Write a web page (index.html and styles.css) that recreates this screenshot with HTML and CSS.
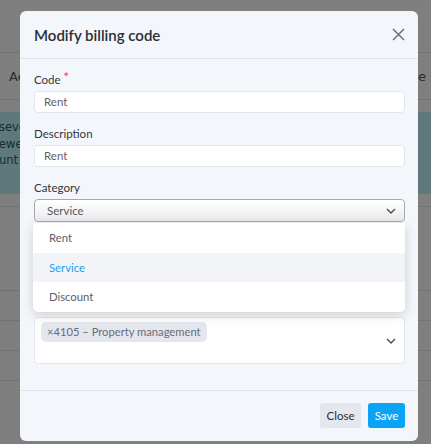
FILE: index.html
```html
<!DOCTYPE html>
<html lang="en">
<head>
<meta charset="utf-8">
<title>Modify billing code</title>
<link rel="stylesheet" href="styles.css">
</head>
<body>
<div class="page">
  <div class="toolbar"></div>
  <div class="table-head">
    <span class="th-left">Actions</span>
    <span class="th-right">Close s</span>
  </div>
  <div class="alert">
    <p class="alert-line">severe</p>
    <p class="alert-line">ewed</p>
    <p class="alert-line">unt c</p>
  </div>
  <div class="row r1"></div>
  <div class="row r2"></div>
  <div class="row r3"></div>
  <div class="row r4"></div>
  <div class="row r5"></div>
</div>
<div class="overlay"></div>

<div class="modal">
  <div class="modal-header">
    <h1 class="modal-title">Modify billing code</h1>
    <svg class="close-icon" width="13" height="13" viewBox="0 0 13 13"><path d="M1 1L12 12M12 1L1 12" stroke="#6e7074" stroke-width="1.5" fill="none"/></svg>
  </div>
  <div class="modal-body">
    <div class="field">
      <label class="label">Code <span class="req">*</span></label>
      <div class="input">Rent</div>
    </div>
    <div class="field">
      <label class="label">Description</label>
      <div class="input">Rent</div>
    </div>
    <div class="field">
      <label class="label">Category</label>
      <div class="select">
        <span>Service</span>
        <svg class="chev" width="10" height="6" viewBox="0 0 10 6"><path d="M1 1L5 5L9 1" stroke="#4b4d52" stroke-width="1.4" fill="none"/></svg>
      </div>
    </div>
    <div class="field hidden-field">
      <label class="label">Account</label>
      <div class="input tall"></div>
    </div>
    <div class="field">
      <label class="label">Accounts</label>
      <div class="multi">
        <span class="tag">×4105 – Property management</span>
        <svg class="chev chev-multi" width="10" height="6" viewBox="0 0 10 6"><path d="M1 1L5 5L9 1" stroke="#4b4d52" stroke-width="1.4" fill="none"/></svg>
      </div>
    </div>
  </div>
  <div class="modal-footer">
    <button class="btn btn-close">Close</button>
    <button class="btn btn-save">Save</button>
  </div>

  <ul class="menu">
    <li class="menu-item">Rent</li>
    <li class="menu-item active">Service</li>
    <li class="menu-item">Discount</li>
  </ul>
</div>
</body>
</html>
```

FILE: styles.css
```css
* { box-sizing: border-box; }
html, body { margin: 0; padding: 0; }
body {
  width: 431px;
  height: 444px;
  overflow: hidden;
  position: relative;
  background: #fff;
  font-family: Lato, "Open Sans", "Liberation Sans", sans-serif;
  color: #333;
}

/* background page */
.page { display: flex; flex-direction: column; }
.toolbar { height: 53px; background: #fff; border-bottom: 1px solid #e4e4e4; }
.table-head {
  height: 47px;
  display: flex;
  align-items: center;
  justify-content: space-between;
  padding: 0 0 0 9px;
  border-bottom: 1px solid #e4e4e4;
  font-size: 13px;
  color: #555;
  font-family: "DejaVu Sans", sans-serif;
  white-space: nowrap;
}
.th-right { margin-right: -6px; }
.alert {
  margin-top: 12px;
  height: 82px;
  background: #bff3f5;
  font-family: "DejaVu Sans", sans-serif;
  font-size: 11.5px;
  color: #34585e;
  padding-top: 7px;
  text-indent: -1px;
}
.alert-line { margin: 0; line-height: 16.5px; }
.row { height: 30px; border-top: 1px solid #e4e4e4; }
.r1 { margin-top: 12px; height: 84px; }
.r5 { height: 40px; }
.overlay { position: absolute; inset: 0; background: rgba(0, 0, 0, 0.5); }

/* modal */
.modal {
  position: absolute;
  left: 20px;
  top: 11px;
  width: 398px;
  height: 430px;
  background: #f3f6fa;
  border-radius: 6px;
  display: flex;
  flex-direction: column;
}
.modal-header {
  height: 48px;
  padding: 0 13px 0 14px;
  display: flex;
  align-items: center;
  justify-content: space-between;
  border-bottom: 1px solid #e2e6ec;
}
.modal-title {
  margin: 0;
  font-size: 15px;
  font-weight: 600;
  color: #2a2d35;
}

.modal-body {
  flex: 1;
  padding: 12px 13px 0 14px;
  display: flex;
  flex-direction: column;
  gap: 12px;
}
.field { display: flex; flex-direction: column; gap: 2px; }
.label {
  font-size: 11.5px;
  line-height: 18px;
  color: #343740;
}
.req { color: #f0383b; font-size: 13px; vertical-align: top; line-height: 13px; }
.input {
  height: 22px;
  background: #fff;
  border: 1px solid #e3e6ec;
  border-radius: 4px;
  padding: 0 9px;
  font-size: 11.5px;
  line-height: 20px;
  color: #5f6168;
}
.input.tall { height: 31px; }
.select {
  height: 23px;
  border: 1px solid #a8a9ae;
  border-radius: 4px;
  background: linear-gradient(#ffffff, #ebebed);
  display: flex;
  align-items: center;
  justify-content: space-between;
  padding: 0 8px 0 12px;
  font-size: 11.5px;
  color: #55575e;
}
.multi {
  height: 47px;
  background: #fff;
  border: 1px solid #e3e6ec;
  border-radius: 4px;
  padding: 4px 8px 0 6px;
  display: flex;
  align-items: flex-start;
  justify-content: space-between;
}
.tag {
  height: 20px;
  line-height: 20px;
  padding: 0 6px;
  background: #e4e6ee;
  border-radius: 5px;
  font-size: 11.2px;
  color: #6a6d76;
  white-space: nowrap;
}
.chev-multi { margin-top: 16px; }

.modal-footer {
  height: 51px;
  border-top: 1px solid #e2e6ec;
  display: flex;
  align-items: center;
  justify-content: flex-end;
  gap: 7px;
  padding: 0 13px 1px 0;
}
.btn {
  height: 25px;
  border: none;
  border-radius: 3px;
  font-family: inherit;
  font-size: 11.5px;
  padding: 0;
}
.btn-close { width: 41px; background: #e5e7ee; color: #2c2e33; }
.btn-save { width: 37px; background: #0aa3f5; color: #fff; }

/* dropdown */
.menu {
  position: absolute;
  left: 13px;
  top: 212px;
  width: 372px;
  margin: 0;
  padding: 0;
  list-style: none;
  background: #fff;
  border-radius: 0 0 5px 5px;
  box-shadow: 0 3px 12px rgba(0, 0, 0, 0.16);
}
.menu-item {
  height: 29.7px;
  line-height: 29.7px;
  padding-left: 16px;
  font-size: 11.3px;
  color: #5c5e66;
}
.menu-item.active { background: #f3f4f8; color: #1aa0f2; }
```
